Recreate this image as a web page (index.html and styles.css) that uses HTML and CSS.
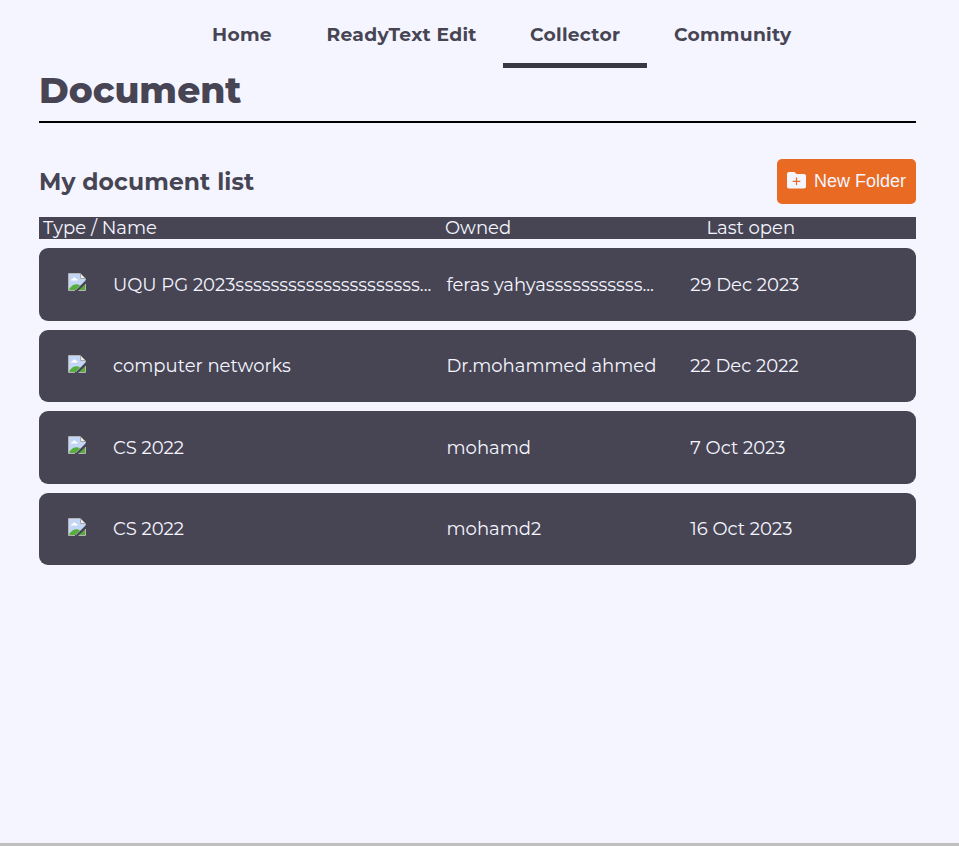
FILE: index.html
```html
<!DOCTYPE html>
<html lang="en">
<head>
<meta charset="utf-8">
<title>Document</title>
<link rel="stylesheet" href="styles.css">
</head>
<body>
<svg class="defs" width="0" height="0" aria-hidden="true">
  <symbol id="missing" viewBox="0 0 18 18">
    <path fill="#c3d6f5" d="M1 1h11l5 5v2L8 17H1z"/>
    <path fill="#fff" d="M3 7.500c0-1.200.8-1.700 1.700-1.600C5 4.200 7.500 4.100 8 5.800 9.200 5.700 9.800 6.700 9.500 7.500z"/>
    <path fill="#58ae3a" d="M1.500 17v-1.500C4.500 11.500 8.500 10 12 12.500L7.500 17z"/>
    <path fill="none" stroke="#b4b4b4" d="M7 17.500H.5V.5H12"/>
    <path fill="#eee" stroke="#a7a7a7" d="M12.500 .5v5h5z"/>
    <path fill="none" stroke="#b4b4b4" d="M17.500 6v1.500"/>
    <path fill="#58ae3a" d="M11 17l6-5.500V17z"/>
    <path fill="none" stroke="#b4b4b4" d="M10.500 17.500h7V11"/>
  </symbol>
</svg>
<nav class="nav">
  <a class="home"><span>Home</span></a>
  <a class="edit"><span>ReadyText Edit</span></a>
  <a class="collector active"><span>Collector</span></a>
  <a class="community"><span>Community</span></a>
</nav>
<main class="page">
  <h1>Document</h1>
  <div class="toolbar">
    <h2>My document list</h2>
    <button class="new-folder">
      <svg width="19" height="17" viewBox="0 0 19 17"><path fill="#f5f5ff" d="M2 0h4.800c.7 0 1 .2 1.500.7L9.500 2H17c1.200 0 2 .8 2 2v10.500c0 1.200-.8 2-2 2H2c-1.200 0-2-.8-2-2V2C0 .8.800 0 2 0z"/><path stroke="#e96a22" stroke-width="1.200" d="M9.500 5.500v7.500M5.700 9.300h7.600"/></svg>
      <span>New Folder</span>
    </button>
  </div>
  <div class="head"><span class="h-name">Type / Name</span><span class="h-owner">Owned</span><span>Last open</span></div>
  <div class="list">
    <div class="row"><svg class="icon"><use href="#missing"/></svg><span class="name">UQU PG 2023sssssssssssssssssssss...</span><span class="owner">feras yahyasssssssssss...</span><span>29 Dec 2023</span></div>
    <div class="row"><svg class="icon"><use href="#missing"/></svg><span class="name">computer networks</span><span class="owner">Dr.mohammed ahmed</span><span>22 Dec 2022</span></div>
    <div class="row"><svg class="icon"><use href="#missing"/></svg><span class="name">CS 2022</span><span class="owner">mohamd</span><span>7 Oct 2023</span></div>
    <div class="row"><svg class="icon"><use href="#missing"/></svg><span class="name">CS 2022</span><span class="owner">mohamd2</span><span>16 Oct 2023</span></div>
  </div>
</main>
<footer class="edge"></footer>
</body>
</html>
```
FILE: styles.css
```css
* { box-sizing: border-box; }
body {
  margin: 0;
  height: 846px;
  display: flex;
  flex-direction: column;
  overflow: hidden;
  background: #f5f5ff;
  color: #474554;
  font: 18px/22px Montserrat, Inter, sans-serif;
  white-space: nowrap;
}
.defs { position: absolute; }
.nav { display: flex; height: 68px; padding-left: 185px; font-size: 18.720px; font-weight: 700; letter-spacing: .27px; }
.nav a { padding: 24px 0 0 27px; border-bottom: 5px solid transparent; }
.nav .active { border-color: #3a3844; }
.home { width: 114.500px; }
.edit { width: 203.500px; }
.collector { width: 144px; }
.community { width: 145px; }
.page { flex: 1; padding: 0 43px 0 39px; }
h1 {
  margin: 0;
  height: 55px;
  border-bottom: 2px solid #000;
  font-size: 36px;
  font-weight: 800;
  line-height: 44px;
}
.toolbar { display: flex; justify-content: space-between; height: 45px; margin: 36px 0 13px; }
h2 { margin: 0; font-size: 23.400px; font-weight: 700; line-height: 46px; letter-spacing: .12px; }
.new-folder {
  display: flex;
  align-items: center;
  gap: 8px;
  width: 139px;
  height: 45px;
  padding: 0 0 1px 10px;
  border: 0;
  border-radius: 5px;
  background: #e96a22;
  color: #f5f5ff;
  font: 18px "Liberation Sans", sans-serif;
}
.new-folder svg { margin-bottom: 1px; }
.head { display: flex; height: 22px; padding-left: 4px; background: #474554; color: #f5f5ff; }
.h-name { width: 402px; }
.h-owner { width: 261.500px; }
.list { display: flex; flex-direction: column; gap: 9px; margin-top: 9px; color: #f5f5ff; }
.row {
  display: flex;
  align-items: center;
  height: 72.500px;
  padding: .5px 0 0 29px;
  border-radius: 9px;
  background: #474554;
}
.icon { width: 18px; height: 18px; margin: 0 27px 5px 0; }
.name { width: 333.500px; }
.owner { width: 243.800px; }
.edge { height: 3px; background: #c0c0c0; }
```
